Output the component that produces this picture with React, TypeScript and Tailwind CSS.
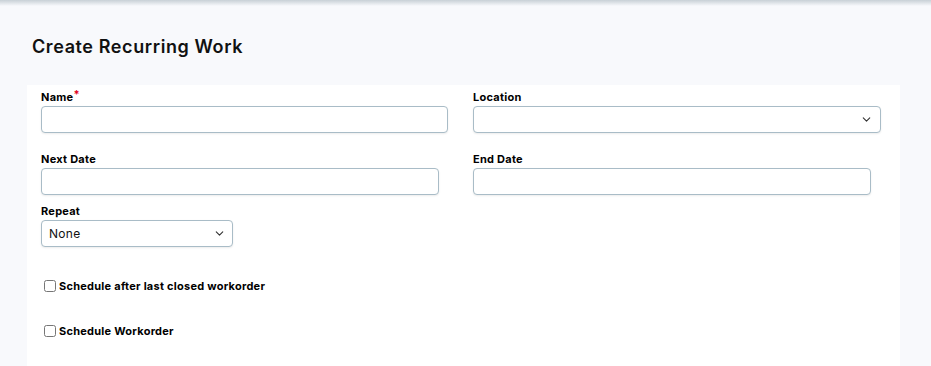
import { ChevronDown } from "lucide-react";

const font = { fontFamily: "Inter, 'Open Sans', sans-serif" };

const inputCls =
  "h-[27px] rounded-[4px] border border-[#a9bcc7] bg-white shadow-[0_1px_2px_rgba(0,0,0,0.08)]";

function Label({ text, required }: { text: string; required?: boolean }) {
  return (
    <label className="block h-[16px] text-[11px] leading-[14px] font-bold tracking-[0.25px] text-black">
      {text}
      {required && <span className="relative -top-[3px] text-[#e0001b]">*</span>}
    </label>
  );
}

export default function App() {
  return (
    <div className="relative h-[366px] w-[931px] overflow-hidden bg-[#f8f9fc]" style={font}>
      <div className="h-[6px] bg-gradient-to-b from-[#c8d0d6] to-[#f8f9fc]" />
      <h1 className="mt-[30px] ml-[32px] text-[18px] leading-[22px] font-semibold tracking-[0.6px] text-[#111]">
        Create Recurring Work
      </h1>
      <div className="mt-[27px] ml-[27px] h-[300px] w-[873px] bg-white pt-[5px] pl-[14px]">
        <div className="flex gap-[25px]">
          <div className="w-[407px]">
            <Label text="Name" required />
            <input className={`${inputCls} w-[407px]`} />
          </div>
          <div className="w-[408px]">
            <Label text="Location" />
            <div className={`${inputCls} flex w-[408px] items-center justify-end pr-[7px]`}>
              <ChevronDown size={13} strokeWidth={2} className="text-[#333]" />
            </div>
          </div>
        </div>
        <div className="mt-[19px] flex gap-[34px]">
          <div className="w-[398px]">
            <Label text="Next Date" />
            <input className={`${inputCls} w-[398px]`} />
          </div>
          <div className="w-[398px]">
            <Label text="End Date" />
            <input className={`${inputCls} w-[398px]`} />
          </div>
        </div>
        <div className="mt-[9px]">
          <Label text="Repeat" />
          <div
            className={`${inputCls} flex w-[192px] items-center justify-between pr-[6px] pl-[7px] text-[12px] tracking-[0.3px] text-[#111]`}
          >
            <span>None</span>
            <ChevronDown size={13} strokeWidth={2} className="text-[#333]" />
          </div>
        </div>
        <div className="mt-[31px] ml-[3px] flex items-center gap-[3px]">
          <input type="checkbox" className="h-[12px] w-[12px] rounded-[2px]" />
          <span className="text-[11px] font-bold tracking-[0.25px] text-black">
            Schedule after last closed workorder
          </span>
        </div>
        <div className="mt-[28px] ml-[3px] flex items-center gap-[3px]">
          <input type="checkbox" className="h-[12px] w-[12px] rounded-[2px]" />
          <span className="text-[11px] font-bold tracking-[0.25px] text-black">Schedule Workorder</span>
        </div>
      </div>
    </div>
  );
}
